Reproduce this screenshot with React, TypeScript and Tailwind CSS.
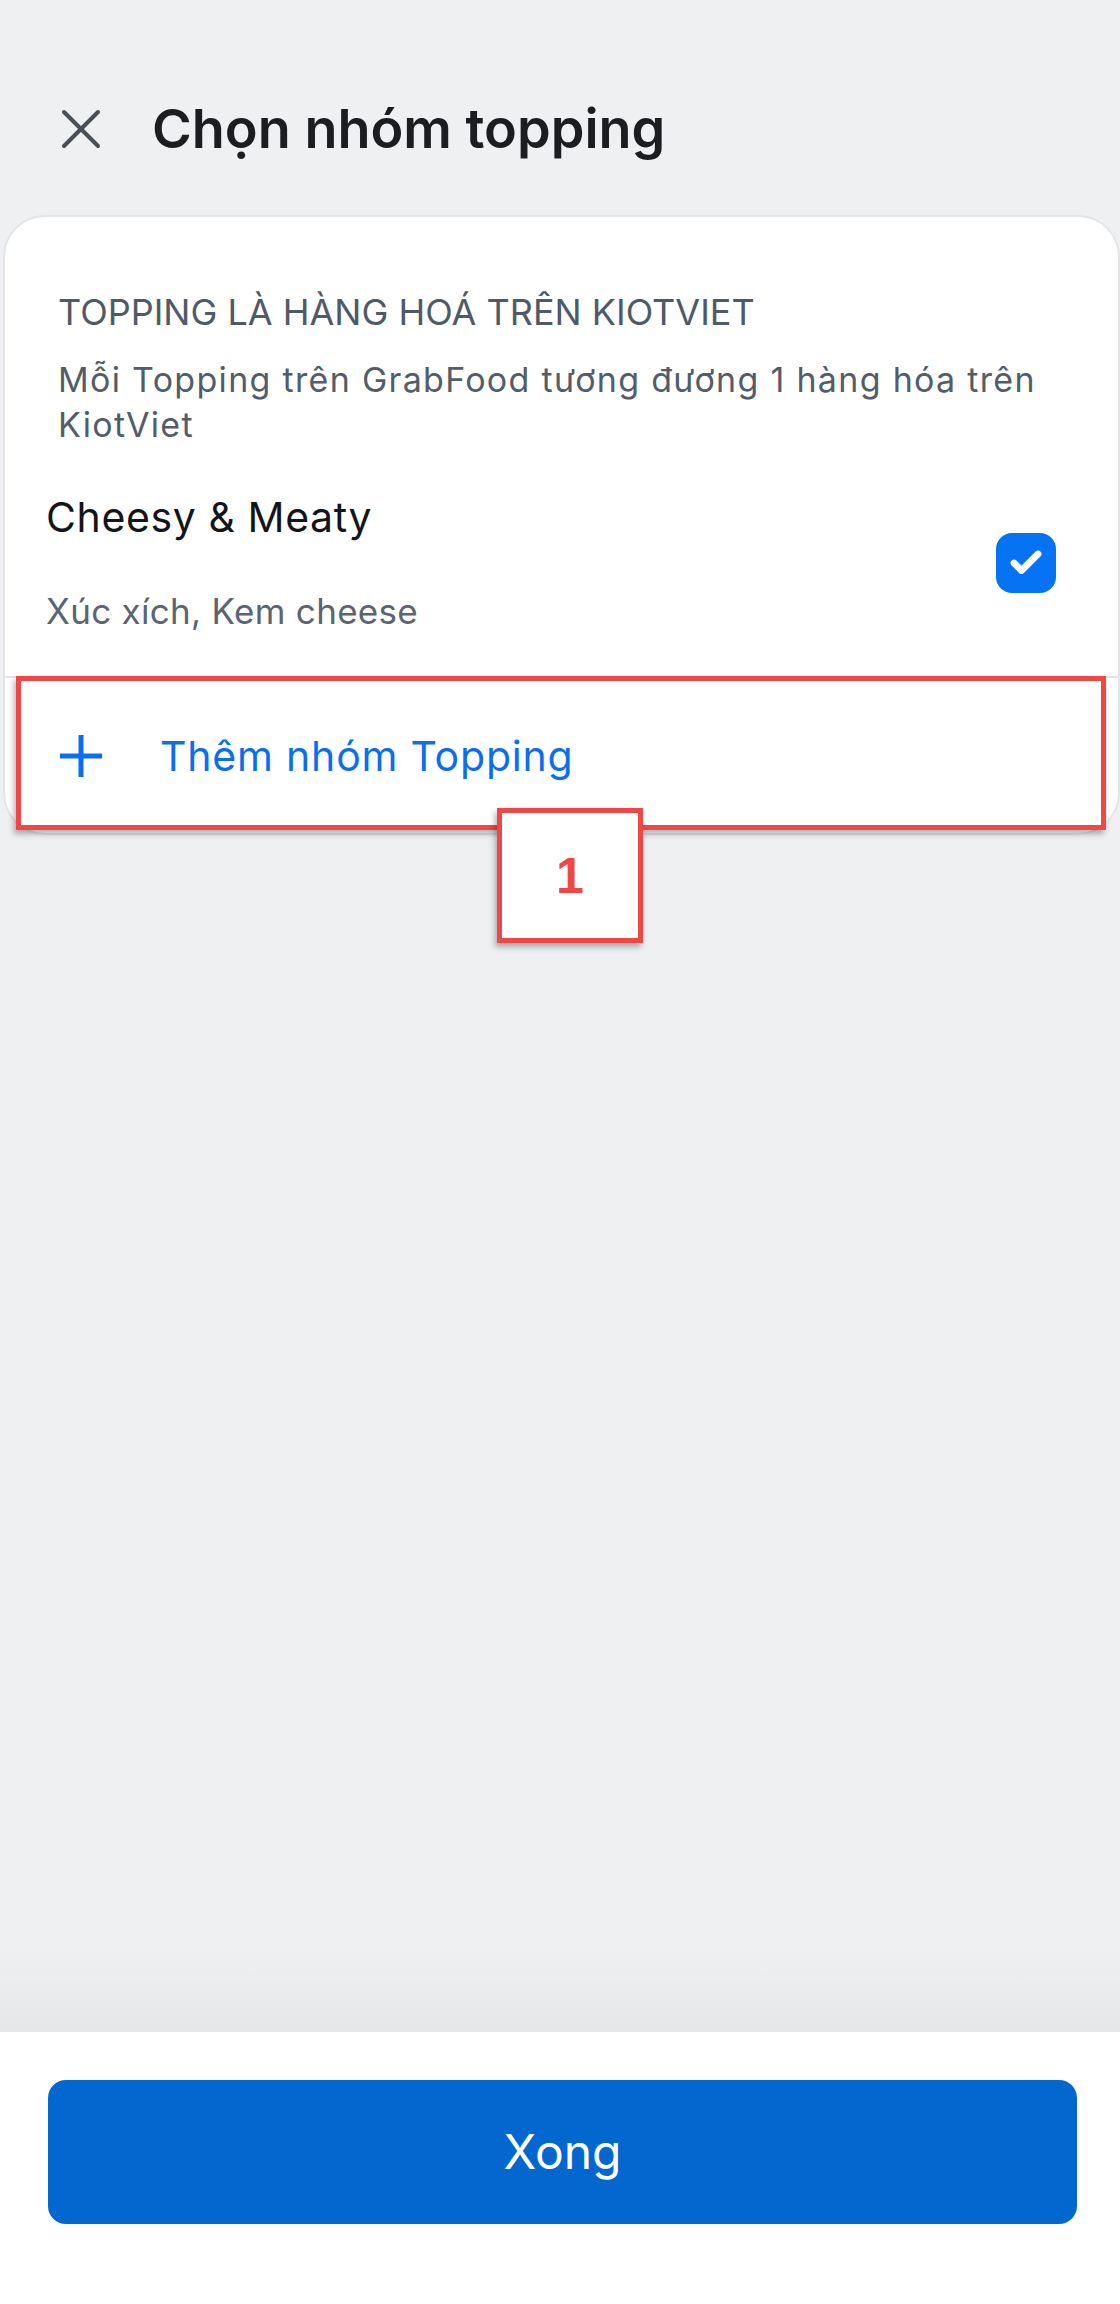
import { Check } from "lucide-react";

function CloseIcon() {
  return (
    <svg width="40" height="40" viewBox="0 0 40 40" fill="none" stroke="#4a4f56" strokeWidth="4" strokeLinecap="round">
      <path d="M3 3 L37 37" />
      <path d="M37 3 L3 37" />
    </svg>
  );
}

function PlusIcon() {
  return (
    <svg width="42" height="42" viewBox="0 0 42 42" fill="none" stroke="#0a6ef0" strokeWidth="5">
      <path d="M21 0 V42" />
      <path d="M0 21 H42" />
    </svg>
  );
}

export default function App() {
  return (
    <div className="relative flex h-[2304px] w-[1120px] flex-col overflow-hidden bg-[#eff0f2] font-['Inter',sans-serif]">
      <header className="mt-[97px] flex h-[64px] items-center">
        <button className="ml-[61px] flex h-[40px] w-[40px] items-center justify-center">
          <CloseIcon />
        </button>
        <h1 className="ml-[51px] text-[54px] leading-[64px] font-semibold text-[#1b1d21]">Chọn nhóm topping</h1>
      </header>

      <section className="mt-[54px] ml-[3px] w-[1117px] overflow-hidden rounded-[42px] border-2 border-[#e4e5e8] bg-white">
        <div className="px-[53px] pt-[73px]">
          <h2 className="text-[36px] leading-[44px] text-[#4f5a66]">TOPPING LÀ HÀNG HOÁ TRÊN KIOTVIET</h2>
          <p className="mt-[23px] text-[34px] leading-[45px] tracking-[1.3px] text-[#525d69]">
            Mỗi Topping trên GrabFood tương đương 1 hàng hóa trên KiotViet
          </p>
        </div>

        <div className="flex items-center justify-between pt-[46px] pr-[62px] pb-[44px] pl-[41px]">
          <div className="flex flex-col">
            <span className="text-[41px] leading-[48px] tracking-[0.6px] text-[#141518]">Cheesy &amp; Meaty</span>
            <span className="mt-[49px] text-[35px] leading-[42px] tracking-[0.3px] text-[#5b6470]">Xúc xích, Kem cheese</span>
          </div>
          <span className="flex h-[60px] w-[60px] items-center justify-center rounded-[16px] bg-[#0573f4]">
            <Check size={36} strokeWidth={4.5} color="#ffffff" />
          </span>
        </div>

        <div className="h-[2px] bg-[#e3e4e7]" />

        <button className="flex h-[155px] w-full items-center pl-[55px]">
          <PlusIcon />
          <span className="ml-[58px] text-[41px] leading-[48px] tracking-[0.8px] text-[#0a6ef0]">Thêm nhóm Topping</span>
        </button>
      </section>

      <div className="flex-1" />
      <div className="h-[80px] bg-gradient-to-b from-[#eff0f2] to-[#e6e7e9]" />
      <footer className="h-[272px] bg-white pt-[48px] pr-[43px] pl-[48px]">
        <button className="flex h-[144px] w-full items-center justify-center rounded-[18px] bg-[#0367d0] text-[48px] text-white">
          Xong
        </button>
      </footer>

      {/* annotation overlay */}
      <div className="absolute top-[676px] left-[16px] h-[154px] w-[1090px] border-[5px] border-[#f04646] shadow-[-2px_4px_6px_rgba(0,0,0,0.3)]" />
      <div className="absolute top-[808px] left-[497px] flex h-[135px] w-[146px] items-center justify-center border-[5px] border-[#f04646] bg-white shadow-[-2px_4px_6px_rgba(0,0,0,0.3)]">
        <span className="font-['Liberation_Sans',sans-serif] text-[50px] leading-none font-bold text-[#f04646]">1</span>
      </div>
    </div>
  );
}
